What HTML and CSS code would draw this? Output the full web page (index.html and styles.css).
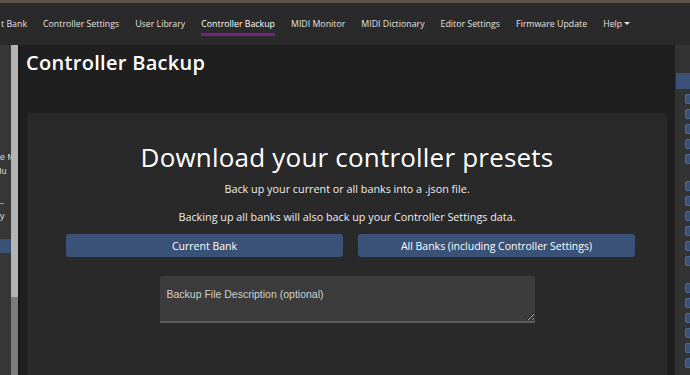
FILE: index.html
```html
<!DOCTYPE html>
<html lang="en">
<head>
  <meta charset="UTF-8">
  <title>Controller Backup</title>
  <link rel="stylesheet" href="styles.css">
</head>
<body>
  <div class="topline"></div>
  <nav class="navbar">
    <a class="nav-item">t Bank</a>
    <a class="nav-item">Controller Settings</a>
    <a class="nav-item">User Library</a>
    <a class="nav-item active">Controller Backup</a>
    <a class="nav-item">MIDI Monitor</a>
    <a class="nav-item">MIDI Dictionary</a>
    <a class="nav-item">Editor Settings</a>
    <a class="nav-item">Firmware Update</a>
    <a class="nav-item">Help <span class="caret"></span></a>
  </nav>
  <div class="workspace">
    <aside class="left-panel">
      <div class="left-list">
        <div class="left-row">ne M</div>
        <div class="left-row">Hu</div>
        <div class="left-row sep">—</div>
        <div class="left-row after-sep">ey</div>
        <div class="left-row selected"></div>
      </div>
    </aside>
    <div class="scrollbar"><div class="thumb"></div></div>
    <main class="main">
      <h1 class="page-title">Controller Backup</h1>
      <section class="card">
        <h2>Download your controller presets</h2>
        <p>Back up your current or all banks into a .json file.</p>
        <p>Backing up all banks will also back up your Controller Settings data.</p>
        <div class="btn-row">
          <button class="btn">Current Bank</button>
          <button class="btn">All Banks (including Controller Settings)</button>
        </div>
        <textarea class="desc" placeholder="Backup File Description (optional)"></textarea>
      </section>
    </main>
    <aside class="right-panel">
      <div class="right-head"></div>
      <div class="chip-group">
        <span class="chip"></span><span class="chip"></span><span class="chip"></span><span class="chip"></span><span class="chip"></span>
      </div>
      <div class="chip-group">
        <span class="chip"></span><span class="chip"></span><span class="chip"></span><span class="chip"></span><span class="chip"></span><span class="chip"></span>
      </div>
      <div class="chip-group">
        <span class="chip"></span><span class="chip"></span><span class="chip"></span><span class="chip"></span><span class="chip"></span><span class="chip"></span>
      </div>
    </aside>
  </div>
</body>
</html>
```

FILE: styles.css
```css
*{
  box-sizing: border-box;
}
html,body{
  margin: 0;
  height: 100%;
}
body{
  background: #1f1f1f;
  font-family: "Open Sans", "DejaVu Sans", sans-serif;
  color: #fff;
  display: flex;
  flex-direction: column;
  overflow: hidden;
}
.topline{
  height: 3px;
  background: #5e5247;
}
.navbar{
  height: 42px;
  background: #2a2a2a;
  display: flex;
  align-items: center;
  gap: 16px;
  padding: 0 0 2px 1px;
  white-space: nowrap;
  overflow: hidden;
}
.nav-item{
  font-size: 8.8px;
  color: #e2e2e2;
  position: relative;
  padding: 5px 0;
  margin-top: 2px;
}
.nav-item.active{
  color: #fff;
}
.nav-item.active::after{
  content: "";
  position: absolute;
  left: 0;
  right: 0;
  bottom: -1px;
  height: 3px;
  background: #7a1f88;
}
.caret{
  display: inline-block;
  border-left: 3px solid transparent;
  border-right: 3px solid transparent;
  border-top: 3px solid #e2e2e2;
  vertical-align: 2px;
}
.workspace{
  flex: 1;
  display: flex;
  min-height: 0;
}
.left-panel{
  width: 11px;
  background: #363636;
  overflow: hidden;
  font-family: "Liberation Sans", sans-serif;
  font-size: 9px;
  color: #ddd;
}
.left-list{
  margin-top: 105px;
  margin-left: -5px;
  white-space: nowrap;
}
.left-row{
  height: 14px;
  line-height: 14px;
}
.left-row.sep{
  margin-top: 21px;
  height: 8px;
  line-height: 8px;
}
.left-row.after-sep{
  margin-top: 2px;
}
.left-row.selected{
  margin-top: 16px;
  margin-left: 5px;
  height: 14px;
  background: #3a5277;
}
.scrollbar{
  width: 9px;
  background: #7d7d7d;
  border-right: 2px solid #1a1a1a;
}
.thumb{
  height: 252px;
  background: #b4b4b4;
}
.main{
  flex: 1;
  padding: 0 8px 0 7px;
  display: flex;
  flex-direction: column;
}
.page-title{
  margin: 4px 0 0 -1px;
  font-size: 20px;
  font-weight: 600;
  height: 64px;
  letter-spacing: 0.3px;
}
.card{
  flex: 1;
  background: #292929;
  border-radius: 4px 4px 0 0;
  display: flex;
  flex-direction: column;
  align-items: center;
  padding: 26px 32px 0;
}
.card h2{
  margin: 0;
  font-size: 26px;
  font-weight: 400;
  letter-spacing: 0.2px;
}
.card p{
  margin: 6px 0 5px;
  font-size: 10.8px;
  color: #eee;
}
.card p + p{
  margin-top: 8px;
}
.btn-row{
  align-self: stretch;
  display: flex;
  gap: 15px;
  margin: 5px 0 0 7px;
}
.btn{
  flex: 1;
  height: 23px;
  border: none;
  border-radius: 3px;
  background: #3a5277;
  color: #fff;
  font-family: inherit;
  font-size: 10.5px;
}
.desc{
  margin-top: 19px;
  width: 375px;
  height: 47px;
  resize: vertical;
  background: #3c3c3c;
  border: none;
  border-bottom: 2px solid #5c5c5c;
  border-radius: 2px 2px 0 0;
  padding: 12px 7px;
  font-family: "Liberation Sans", sans-serif;
  font-size: 10.5px;
  color: #ddd;
}
.desc::placeholder{
  color: #d0d0d0;
}
.right-panel{
  width: 15px;
  background: #333;
  padding-top: 28px;
}
.right-head{
  height: 16px;
  margin-left: 1px;
  background: #3a5277;
  margin-bottom: 5px;
}
.chip-group{
  display: flex;
  flex-direction: column;
  gap: 5px;
  margin-bottom: 17px;
  padding-left: 10px;
}
.chip{
  width: 10px;
  height: 10px;
  border-radius: 2px;
  background: #3a5277;
  border: 1px solid #4d6a96;
}
```
